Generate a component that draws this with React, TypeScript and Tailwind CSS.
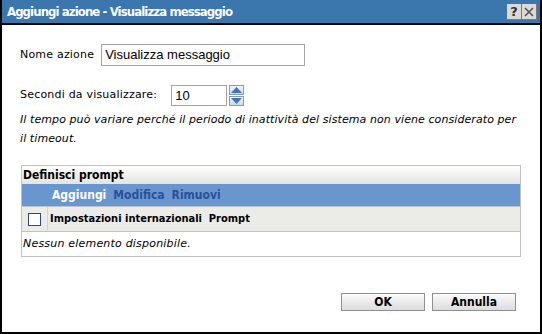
import React from 'react';

const sans = { fontFamily: '"DejaVu Sans", Verdana, sans-serif' };
const cond = { fontFamily: '"DejaVu Sans Condensed", "DejaVu Sans", sans-serif' };
const arial = { fontFamily: '"Liberation Sans", Arial, sans-serif' };

function Spinner() {
  return (
    <div className="flex flex-col gap-px ml-[2px]">
      <div className="w-[15px] h-[10px] border border-[#8c9bb0] bg-gradient-to-b from-[#f4f7fb] to-[#cdd8e6] flex items-center justify-center">
        <svg width="11" height="6" viewBox="0 0 11 6">
          <polygon points="5.5,0 11,6 0,6" fill="#3b78b8" />
        </svg>
      </div>
      <div className="w-[15px] h-[10px] border border-[#8c9bb0] bg-gradient-to-b from-[#f4f7fb] to-[#cdd8e6] flex items-center justify-center">
        <svg width="11" height="6" viewBox="0 0 11 6">
          <polygon points="0,0 11,0 5.5,6" fill="#3b78b8" />
        </svg>
      </div>
    </div>
  );
}

export default function App() {
  return (
    <div className="w-[542px] h-[334px] bg-white border-x-2 border-b-2 border-black flex flex-col" style={sans}>
      {/* barra del titolo */}
      <div className="h-[25px] bg-[#3b77ad] border-b-2 border-black flex items-center justify-between pl-[5px] pr-[3px] shrink-0">
        <span className="text-white font-bold text-[13px] tracking-[-0.9px]" style={cond}>
          Aggiungi azione - Visualizza messaggio
        </span>
        <div className="flex mt-[1px]">
          <div className="w-[15px] h-[16px] bg-[#dcdad5] border-r border-b border-[#7a7a7a] flex items-center justify-center text-[13px] font-bold text-[#333] leading-none">?</div>
          <div className="w-[15px] h-[16px] bg-[#dcdad5] border-r border-b border-[#7a7a7a] flex items-center justify-center">
            <svg width="10" height="10" viewBox="0 0 10 10">
              <path d="M1 1 L9 9 M9 1 L1 9" stroke="#555" strokeWidth="1.6" />
            </svg>
          </div>
        </div>
      </div>

      <div className="flex flex-col pl-[18px] pr-[19px] flex-1">
        <div className="flex items-center mt-[19px]">
          <span className="text-[11px] text-black mr-[7px] tracking-[0.2px]">Nome azione</span>
          <div className="w-[204px] h-[22px] border border-[#a5a5a5] flex items-center px-[3px] text-[13px] text-black" style={arial}>
            Visualizza messaggio
          </div>
        </div>

        <div className="flex items-center mt-[19px]">
          <span className="text-[11px] text-black mr-[14px] tracking-[0.2px]">Secondi da visualizzare:</span>
          <div className="w-[56px] h-[21px] border border-[#a5a5a5] flex items-center px-[3px] text-[13px] text-black" style={arial}>
            10
          </div>
          <Spinner />
        </div>

        <p className="mt-[4px] w-[503px] text-[11px] italic leading-[19px] tracking-[0.08px] text-black">
          Il tempo può variare perché il periodo di inattività del sistema non viene considerato per il timeout.
        </p>

        {/* tabella prompt */}
        <div className="mt-[17px] ml-[1px] w-[500px] border border-[#c3c3c3] flex flex-col">
          <div className="h-[18px] bg-gradient-to-b from-white to-[#e3e3e1] flex items-center pl-[1px] text-[12px] font-bold text-black" style={cond}>
            Definisci prompt
          </div>
          <div className="h-[22px] bg-[#6a96cf] flex items-center gap-[7px] pl-[30px] text-[12px] font-bold" style={cond}>
            <span className="text-white">Aggiungi</span>
            <span className="text-[#2a509c]">Modifica</span>
            <span className="text-[#2a509c]">Rimuovi</span>
          </div>
          <div className="h-[25px] bg-[#ebebe8] border-t border-[#c3c3c3] flex items-stretch">
            <div className="w-[26px] border-r border-[#d4d4d0] flex items-center justify-center">
              <div className="w-[13px] h-[13px] bg-white border border-[#2b4a73]" />
            </div>
            <div className="flex items-center pl-[2px] text-[11px] font-bold text-black" style={cond}>
              Impostazioni internazionali&nbsp; Prompt
            </div>
          </div>
          <div className="h-[25px] border-t border-[#c3c3c3] flex items-center pl-[1px] text-[11px] italic text-black tracking-[0.2px]">
            Nessun elemento disponibile.
          </div>
        </div>

        <div className="flex justify-end gap-[7px] mt-[36px] pr-[5px]">
          <button className="w-[84px] h-[18px] border border-[#8f8f8f] bg-gradient-to-b from-[#fbfbfb] to-[#dcdcdc] text-[12px] font-bold text-black leading-none" style={cond}>
            OK
          </button>
          <button className="w-[84px] h-[18px] border border-[#8f8f8f] bg-gradient-to-b from-[#fbfbfb] to-[#dcdcdc] text-[12px] font-bold text-black leading-none" style={cond}>
            Annulla
          </button>
        </div>
      </div>
    </div>
  );
}
